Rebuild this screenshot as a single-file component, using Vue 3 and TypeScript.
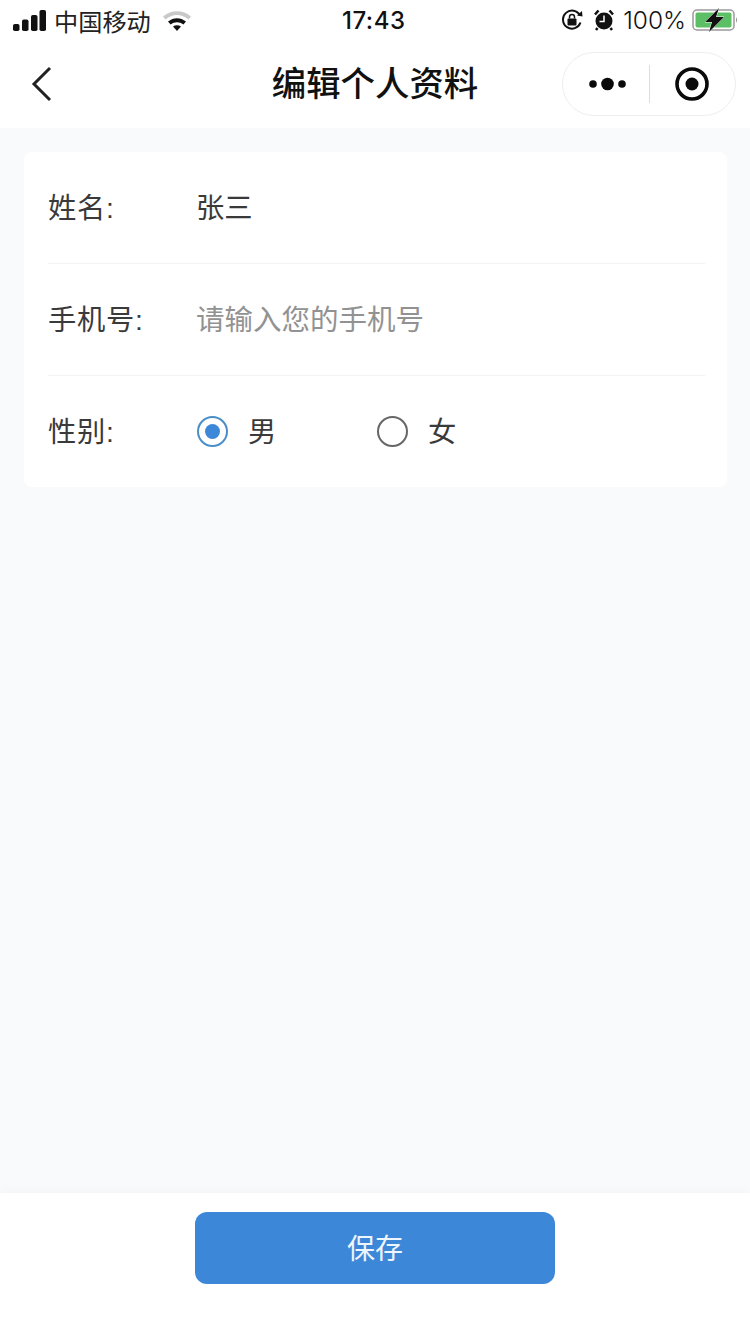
<script setup lang="ts">
import { ref } from 'vue'

const gender = ref('男')
const genders = ['男', '女']
</script>

<template>
  <div class="page">
    <div class="status">
      <div class="status-left">
        <svg class="signal" width="33" height="21" viewBox="0 0 33 21">
          <rect x="0" y="14" width="6.500" height="7" rx="1.800" />
          <rect x="9" y="9.500" width="6.500" height="11.500" rx="1.800" />
          <rect x="18" y="5" width="6.500" height="16" rx="1.800" />
          <rect x="26.500" y="0" width="6.500" height="21" rx="1.800" />
        </svg>
        <span class="carrier">中国移动</span>
        <svg class="wifi" width="30" height="22" viewBox="0 0 30 22">
          <path d="M1 7.500C9 .5 21 .5 29 7.500l-2.500 3C19.500 4.500 10.500 4.500 3.500 10.500z" fill="#c9c9c9" />
          <path d="M6 12.500c5.500-4.500 12.500-4.500 18 0l-2.600 3c-4-3-8.800-3-12.800 0z" fill="#111" />
          <path d="M11 17.500c2.500-1.800 5.500-1.800 8 0l-4 4.500z" fill="#111" />
        </svg>
      </div>
      <span class="time">17:43</span>
      <div class="status-right">
        <svg width="22" height="22" viewBox="0 0 22 22" fill="none">
          <path d="M19.500 13.500A9 9 0 1 1 19 6.500" stroke="#111" stroke-width="2" />
          <path d="M16 6.500l5.500 1 -.5-5.500z" fill="#111" />
          <rect x="6.500" y="9.500" width="9" height="7" rx="1" fill="#111" />
          <path d="M8.500 9.500V8a2.500 2.500 0 0 1 5 0v1.500" stroke="#111" stroke-width="1.500" />
        </svg>
        <svg class="alarm" width="20" height="22" viewBox="0 0 20 22" fill="none">
          <circle cx="10" cy="12" r="8.500" fill="#111" />
          <path d="M10 6.500V12.500H5.500" stroke="#fff" stroke-width="1.500" />
          <path d="M1 5.500 4.500 1.500M19 5.500 15.500 1.500M3.500 19 2 21M16.500 19 18 21" stroke="#111" stroke-width="2.500" />
        </svg>
        <span class="percent">100%</span>
        <svg class="battery" width="46" height="24" viewBox="0 0 46 24" fill="none">
          <rect x="1" y="2" width="41" height="20" rx="4" stroke="#9a9a9a" stroke-width="1.500" />
          <rect x="3.500" y="4.500" width="36" height="15" rx="2" fill="#5cbf65" />
          <path d="M44 9.500c1.500.5 1.500 4.500 0 5z" fill="#9a9a9a" />
          <path d="M27 0 13 14h7l-3 10 15-15h-8z" fill="#111" stroke="#fff" stroke-width="1" paint-order="stroke" />
        </svg>
      </div>
    </div>

    <div class="nav">
      <svg class="back" width="22" height="36" viewBox="0 0 22 36" fill="none">
        <path d="M19 2 3 18l16 16" stroke="#222" stroke-width="3" />
      </svg>
      <h1 class="title">编辑个人资料</h1>
      <div class="capsule">
        <svg width="38" height="14" viewBox="0 0 38 14">
          <circle cx="4" cy="7" r="3.800" />
          <circle cx="18.500" cy="7" r="6.300" />
          <circle cx="33" cy="7" r="3.800" />
        </svg>
        <i class="capsule-line"></i>
        <svg width="34" height="34" viewBox="0 0 34 34" fill="none">
          <circle cx="17" cy="17" r="15" stroke="#0a0a0a" stroke-width="3.600" />
          <circle cx="17" cy="17" r="6.500" fill="#0a0a0a" />
        </svg>
      </div>
    </div>

    <main class="content">
      <section class="card">
        <div class="row">
          <span class="label">姓名:</span>
          <span class="value">张三</span>
        </div>
        <div class="row">
          <span class="label">手机号:</span>
          <span class="value placeholder">请输入您的手机号</span>
        </div>
        <div class="row">
          <span class="label">性别:</span>
          <div class="radios">
            <label v-for="item in genders" :key="item" class="radio" @click="gender = item">
              <i class="dot" :class="{ on: gender === item }"></i>
              <span class="value">{{ item }}</span>
            </label>
          </div>
        </div>
      </section>
    </main>

    <footer class="footer">
      <button class="save">保存</button>
    </footer>
  </div>
</template>

<style>
html, body {
  margin: 0;
  background: #fff;
}
</style>

<style scoped>
.page {
  width: 750px;
  height: 1334px;
  display: flex;
  flex-direction: column;
  overflow: hidden;
  font-family: "Liberation Sans", "Noto Sans CJK SC", sans-serif;
  color: #333;
}
.status {
  height: 40px;
  flex: none;
  display: flex;
  align-items: center;
  justify-content: space-between;
  padding: 0 12px 0 13px;
  position: relative;
  color: #111;
}
.status-left, .status-right {
  display: flex;
  align-items: center;
}
.signal {
  fill: #111;
}
.carrier {
  font-size: 24.200px;
  margin-left: 8px;
  color: #222;
}
.wifi {
  margin-left: 11px;
}
.time {
  position: absolute;
  left: 342px;
  top: 6px;
  font-size: 24px;
  line-height: 30px;
  font-family: "Inter", "Liberation Sans", sans-serif;
  font-weight: 500;
  letter-spacing: 0.5px;
}
.alarm {
  margin-left: 11px;
}
.percent {
  font-size: 24.500px;
  margin-left: 9px;
  font-family: "Inter", "Liberation Sans", sans-serif;
  font-weight: 300;
  color: #111;
}
.battery {
  margin-left: 6px;
}
.nav {
  height: 88px;
  flex: none;
  display: flex;
  align-items: center;
  position: relative;
  padding-left: 31px;
}
.title {
  position: absolute;
  left: 0;
  right: 0;
  margin: 0;
  text-align: center;
  font-size: 34.400px;
  font-weight: 500;
  color: #111;
  line-height: 48px;
  top: 20px;
}
.capsule {
  position: absolute;
  left: 562px;
  top: 12px;
  width: 174px;
  height: 64px;
  box-sizing: border-box;
  border: 1px solid #eee;
  border-radius: 32px;
  display: flex;
  align-items: center;
  padding-left: 26px;
  fill: #0a0a0a;
}
.capsule-line {
  width: 1px;
  height: 38px;
  background: #ddd;
  margin: 0 25px 0 22px;
}
.content {
  flex: 1;
  background: #f9fafc;
  padding: 24px 23px 0 24px;
  min-height: 0;
}
.card {
  background: #fff;
  border-radius: 8px;
  padding-left: 24px;
  padding-right: 22px;
}
.row {
  height: 111px;
  display: flex;
  align-items: center;
  border-bottom: 1px solid #f3f3f3;
  font-size: 28.300px;
  color: #3a3a3a;
}
.row:last-child {
  border-bottom: none;
}
.label {
  width: 148px;
  flex: none;
  margin-bottom: 4px;
  letter-spacing: 0.700px;
}
.value {
  margin-bottom: 4px;
}
.placeholder {
  color: #929292;
  font-size: 28.500px;
}
.radios {
  display: flex;
  margin-left: 1px;
}
.radio {
  display: flex;
  align-items: center;
  width: 180px;
  gap: 20px;
}
.dot {
  width: 31px;
  height: 31px;
  box-sizing: border-box;
  border-radius: 50%;
  border: 2px solid #666;
  display: block;
  position: relative;
}
.dot.on {
  border-color: #4a8ec9;
}
.dot.on::after {
  content: "";
  position: absolute;
  left: 6px;
  top: 6px;
  width: 15px;
  height: 15px;
  border-radius: 50%;
  background: #3d87d8;
}
.footer {
  height: 141px;
  flex: none;
  background: #fff;
  box-sizing: border-box;
  padding-top: 19px;
  display: flex;
  justify-content: center;
  align-items: flex-start;
  box-shadow: 0 -3px 10px rgba(0, 0, 0, 0.025);
  position: relative;
}
.save {
  width: 360px;
  height: 72px;
  border: none;
  border-radius: 12px;
  background: #3d87d8;
  color: #eef5fc;
  font-size: 28px;
  font-family: inherit;
  padding: 0 0 3px;
}
</style>
